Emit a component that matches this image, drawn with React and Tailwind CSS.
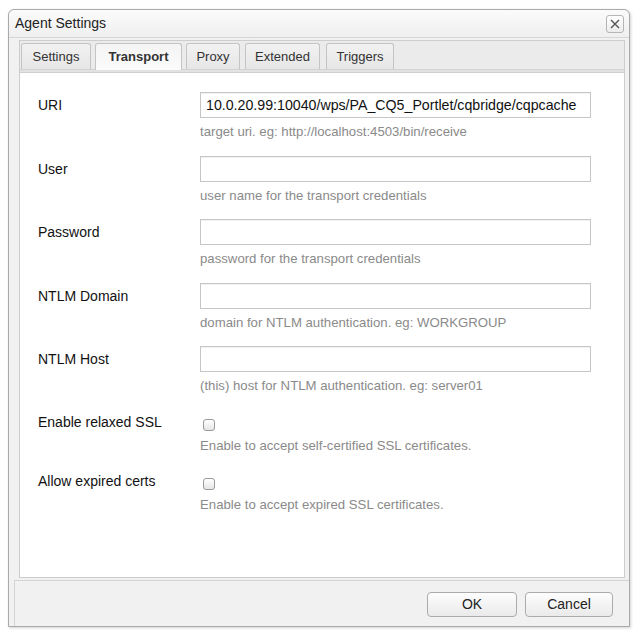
import React from 'react';

const tabs = [
  { name: 'Settings', w: 'w-[70px]', ml: 'ml-0' },
  { name: 'Transport', w: 'w-[87px]', ml: 'ml-[4px]', active: true },
  { name: 'Proxy', w: 'w-[54px]', ml: 'ml-[4px]' },
  { name: 'Extended', w: 'w-[75px]', ml: 'ml-[5px]' },
  { name: 'Triggers', w: 'w-[68px]', ml: 'ml-[6px]' },
];

const textFields = [
  { label: 'URI', value: '10.0.20.99:10040/wps/PA_CQ5_Portlet/cqbridge/cqpcache', hint: 'target uri. eg: http://localhost:4503/bin/receive' },
  { label: 'User', value: '', hint: 'user name for the transport credentials' },
  { label: 'Password', value: '', hint: 'password for the transport credentials' },
  { label: 'NTLM Domain', value: '', hint: 'domain for NTLM authentication. eg: WORKGROUP' },
  { label: 'NTLM Host', value: '', hint: '(this) host for NTLM authentication. eg: server01' },
];

const checkFields = [
  { label: 'Enable relaxed SSL', hint: 'Enable to accept self-certified SSL certificates.' },
  { label: 'Allow expired certs', hint: 'Enable to accept expired SSL certificates.' },
];

function TextRow({ label, value, hint }) {
  return (
    <div className="flex mb-[16.6px]">
      <div className="w-[162px] text-[14px] leading-[26px] text-[#111]">{label}</div>
      <div className="flex flex-col">
        <div className="w-[391px] h-[26px] border border-[#c6c6c6] bg-white shadow-[inset_0_1px_1px_rgba(0,0,0,0.06)] px-[5px] text-[14.2px] leading-[24px] text-[#111] whitespace-nowrap overflow-hidden">
          {value}
        </div>
        <div className="mt-[7px] text-[13.2px] leading-[14px] text-[#8a8a8a]">{hint}</div>
      </div>
    </div>
  );
}

function CheckRow({ label, hint }) {
  return (
    <div className="flex mb-[16px]">
      <div className="w-[162px] text-[14px] leading-[26px] -mt-[1px] text-[#111]">{label}</div>
      <div className="flex flex-col">
        <div className="h-[22px] pt-[9px] pl-[3px]">
          <div className="w-[12px] h-[12px] rounded-[3px] border border-[#9a9a9a] bg-gradient-to-b from-white to-[#e6e6e6]" />
        </div>
        <div className="mt-[7px] text-[13.2px] leading-[14px] text-[#8a8a8a]">{hint}</div>
      </div>
    </div>
  );
}

export default function App() {
  return (
    <div className="w-[641px] h-[638px] bg-white pt-[9px] pl-[8px]" style={{ fontFamily: '"Liberation Sans", Arial, sans-serif' }}>
      <div className="w-[622px] h-[618px] rounded-t-[6px] border border-[#a9a9a9] bg-[#f1f1f1] shadow-[1px_1px_3px_rgba(0,0,0,0.18)] flex flex-col">
        {/* title bar */}
        <div className="h-[28px] flex items-center justify-between pl-[6px] pr-[5px] rounded-t-[6px] bg-gradient-to-b from-[#fbfbfb] to-[#efefef] border-b border-[#d6d6d6]">
          <span className="text-[14px] text-[#222]">Agent Settings</span>
          <button className="w-[18px] h-[18px] rounded-[3px] border border-[#b5b5b5] bg-gradient-to-b from-white to-[#ececec] flex items-center justify-center">
            <svg width="10" height="10" viewBox="0 0 10 10">
              <path d="M1 1 L9 9 M9 1 L1 9" stroke="#555" strokeWidth="1.4" />
            </svg>
          </button>
        </div>

        {/* tab container */}
        <div className="ml-[10px] mr-[4px] mt-[2px] h-[538px] border border-[#cdcdcd] bg-[#ebebeb] flex flex-col">
          <div className="flex items-end pl-[1px] pt-[2px]">
            {tabs.map((t) =>
              t.active ? (
                <div
                  key={t.name}
                  className={`${t.w} ${t.ml} h-[27px] -mb-[1px] rounded-t-[3px] border border-b-0 border-[#c4c4c4] bg-gradient-to-b from-[#f4f4f4] to-[#fbfbfb] flex items-center justify-center text-[13px] font-bold text-[#333] z-10`}
                >
                  {t.name}
                </div>
              ) : (
                <div
                  key={t.name}
                  className={`${t.w} ${t.ml} h-[26px] rounded-t-[3px] border border-b-0 border-[#c4c4c4] bg-gradient-to-b from-[#f2f2f2] to-[#e6e6e6] flex items-center justify-center text-[13px] text-[#333]`}
                >
                  {t.name}
                </div>
              )
            )}
          </div>
          <div className="h-[3px] bg-[#e2e2e2] border-t border-[#d2d2d2]" />
          <div className="flex-1 bg-white border-t border-[#cfcfcf] pl-[18px] pt-[19px]">
            {textFields.map((f) => (
              <TextRow key={f.label} {...f} />
            ))}
            {checkFields.map((f) => (
              <CheckRow key={f.label} {...f} />
            ))}
          </div>
        </div>

        {/* footer */}
        <div className="flex-1 mt-[2px] ml-[5px] border-l border-t border-[#d4d4d4] bg-[#f1f1f1] flex justify-end items-start pt-[11px] pr-[16px] gap-[8px]">
          <button className="w-[90px] h-[25px] rounded-[4px] border border-[#ababab] bg-gradient-to-b from-[#fdfdfd] to-[#eaeaea] text-[14px] text-[#222]">
            OK
          </button>
          <button className="w-[88px] h-[25px] rounded-[4px] border border-[#ababab] bg-gradient-to-b from-[#fdfdfd] to-[#eaeaea] text-[14px] text-[#222]">
            Cancel
          </button>
        </div>
      </div>
    </div>
  );
}
